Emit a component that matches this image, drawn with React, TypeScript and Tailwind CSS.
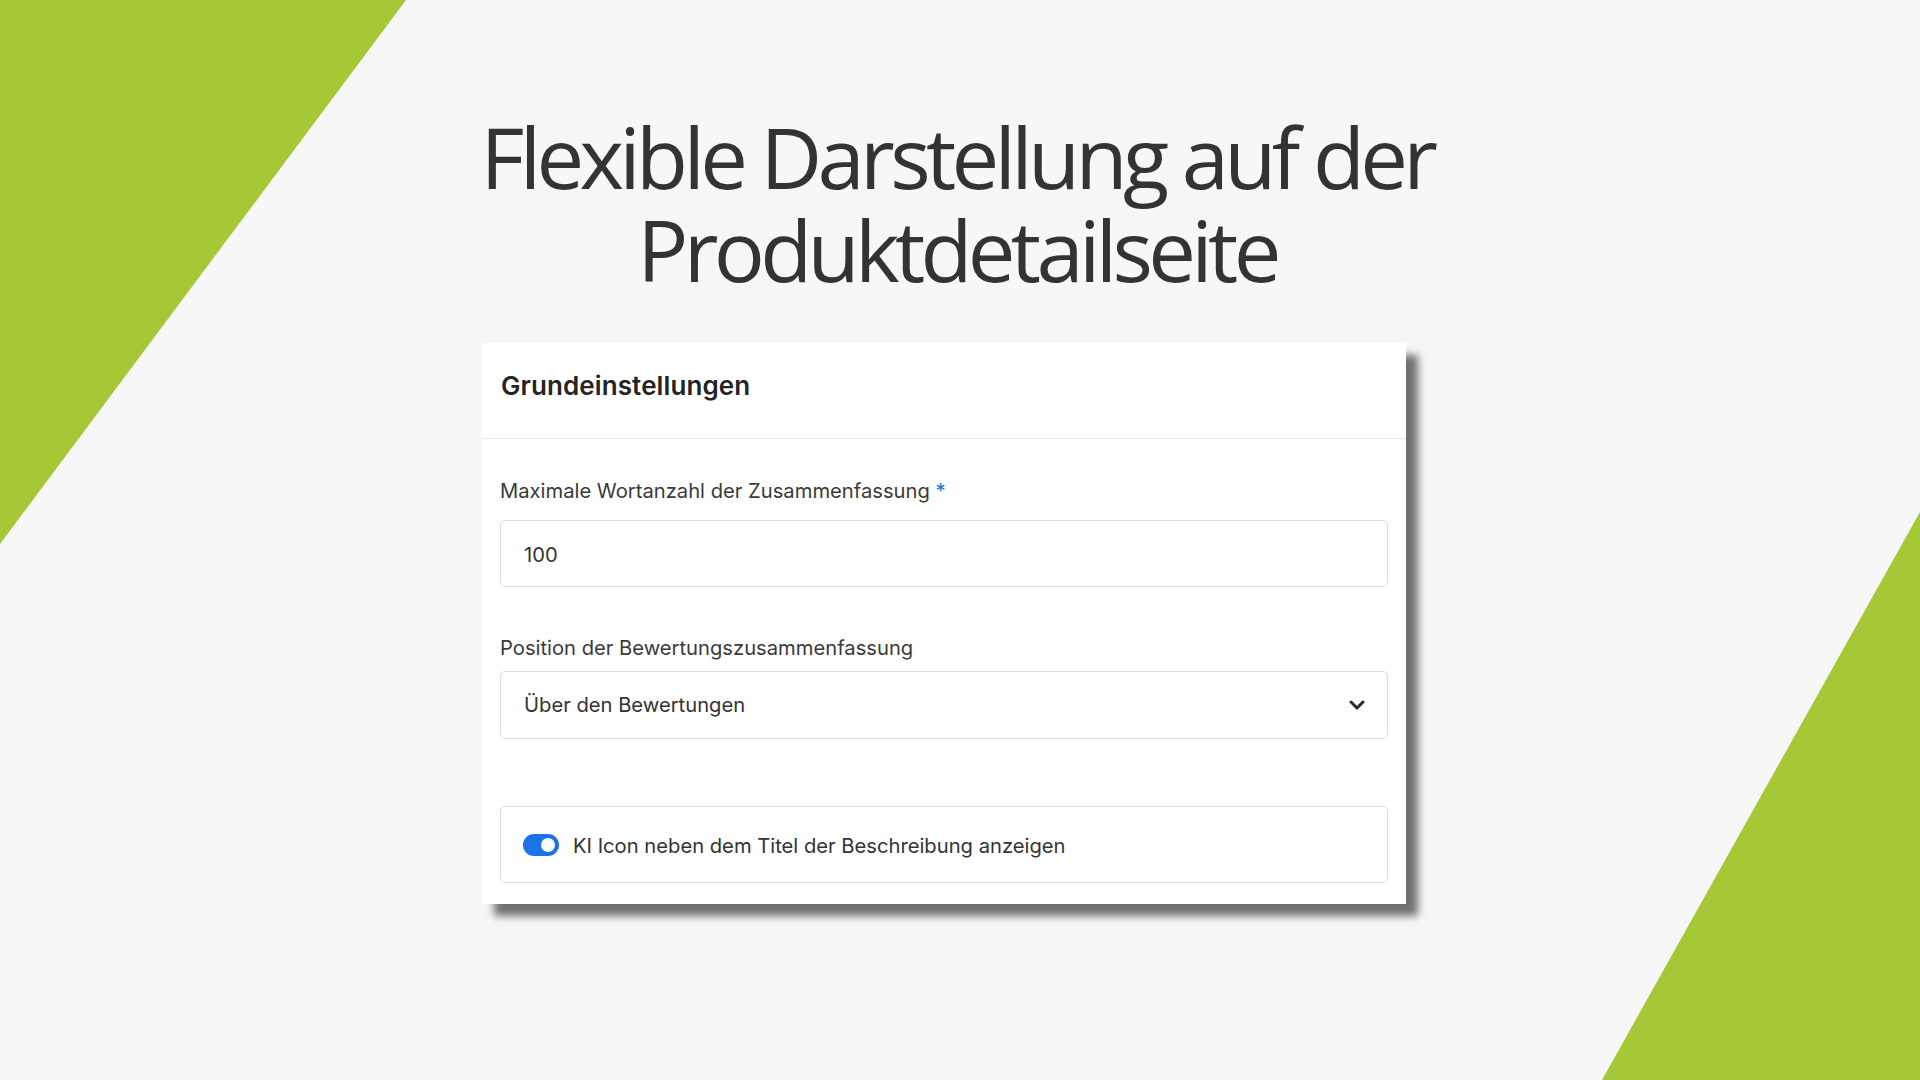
import React from "react";

function Backdrop() {
  return (
    <svg
      className="absolute inset-0 h-full w-full"
      viewBox="0 0 1920 1080"
      preserveAspectRatio="none"
      aria-hidden="true"
    >
      <polygon points="0,0 406,0 0,544" fill="#a6c736" />
      <polygon points="1920,512 1920,1080 1602,1080" fill="#a6c736" />
    </svg>
  );
}

function Chevron() {
  return (
    <svg width="16" height="10" viewBox="0 0 16 10" fill="none">
      <polyline
        points="2,2 8,8 14,2"
        stroke="#2a2a2a"
        strokeWidth="3"
        strokeLinecap="round"
        strokeLinejoin="round"
      />
    </svg>
  );
}

function Toggle() {
  return (
    <div className="flex h-[22px] w-[36px] shrink-0 items-center justify-end rounded-full bg-[#1a73e8] px-[4px]">
      <div className="h-[14px] w-[14px] rounded-full bg-white" />
    </div>
  );
}

export default function App() {
  return (
    <div className="relative h-[1080px] w-full overflow-hidden bg-[#f7f7f7]">
      <Backdrop />
      <div className="relative flex flex-col items-center pt-[110px]">
        <h1 className="mr-[6px] text-center font-['Open_Sans',sans-serif] text-[85px] font-normal leading-[93px] tracking-[-4.7px] text-[#333333]">
          <span className="block">Flexible Darstellung auf der</span>
          <span className="block">Produktdetailseite</span>
        </h1>

        <div className="mr-[32px] mt-[47px] w-[924px] bg-white font-['Inter',sans-serif] shadow-[12px_12px_8px_rgba(0,0,0,0.55)]">
          <div className="flex h-[96px] items-center border-b border-[#e6e6e6] px-[19px] pb-[10px]">
            <h2 className="text-[26px] font-semibold tracking-[0.1px] text-[#242424]">
              Grundeinstellungen
            </h2>
          </div>

          <div className="px-[18px] pb-[21px] pt-[38px] text-[20.2px]">
            <label className="block leading-[28px] text-[#3a3a3a]">
              Maximale Wortanzahl der Zusammenfassung{" "}
              <span className="text-[#1a73e8]">*</span>
            </label>
            <div className="mt-[15px] flex h-[67px] items-center rounded-[5px] border border-[#dcdcdc] px-[23px] pt-[3px] text-[#333333]">
              100
            </div>

            <label className="mt-[47px] block leading-[28px] text-[#3a3a3a]">
              Position der Bewertungszusammenfassung
            </label>
            <div className="mt-[9px] flex h-[68px] items-center justify-between rounded-[5px] border border-[#dcdcdc] pl-[23px] pr-[22px] text-[#333333]">
              <span className="pt-[1px]">Über den Bewertungen</span>
              <Chevron />
            </div>

            <div className="mt-[67px] flex h-[77px] items-center gap-[14px] rounded-[5px] border border-[#dcdcdc] px-[22px] text-[#333333]">
              <Toggle />
              <span className="pt-[3px]">KI Icon neben dem Titel der Beschreibung anzeigen</span>
            </div>
          </div>
        </div>
      </div>
    </div>
  );
}
